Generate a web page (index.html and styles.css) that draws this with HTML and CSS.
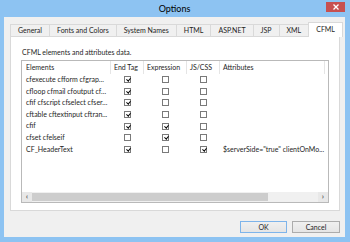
FILE: index.html
```html
<!DOCTYPE html>
<html lang="en">
<head>
    <meta charset="UTF-8">
    <title>Options</title>
    <link rel="stylesheet" href="styles.css">
</head>
<body>
    <div class="window">
        <div class="titlebar">
            <span class="title">Options</span>
            <div class="close">
                <svg width="6" height="6" viewBox="0 0 6 6"><path d="M0.5 0.5 L5.5 5.5 M5.5 0.5 L0.5 5.5" stroke="#fff" stroke-width="1.3"/></svg>
            </div>
        </div>

        <div class="dialog">
            <div class="tabs">
                <div class="tab">General</div>
                <div class="tab">Fonts and Colors</div>
                <div class="tab">System Names</div>
                <div class="tab">HTML</div>
                <div class="tab">ASP.NET</div>
                <div class="tab">JSP</div>
                <div class="tab">XML</div>
                <div class="tab active">CFML</div>
            </div>

            <div class="panel">
                <div class="caption">CFML elements and attributes data.</div>
                <div class="listview">
                    <div class="lv-head">
                        <div class="col">Elements</div>
                        <div class="col">End Tag</div>
                        <div class="col">Expression</div>
                        <div class="col">JS/CSS</div>
                        <div class="col">Attributes</div>
                    </div>
                    <div class="lv-body">
                        <div class="row">
                            <div class="cell">cfexecute cfform cfgrap...</div>
                            <div class="cell chk"><span class="cb on"></span></div>
                            <div class="cell chk"><span class="cb"></span></div>
                            <div class="cell chk"><span class="cb"></span></div>
                            <div class="cell"></div>
                        </div>
                        <div class="row">
                            <div class="cell">cfloop cfmail cfoutput cf...</div>
                            <div class="cell chk"><span class="cb on"></span></div>
                            <div class="cell chk"><span class="cb"></span></div>
                            <div class="cell chk"><span class="cb"></span></div>
                            <div class="cell"></div>
                        </div>
                        <div class="row">
                            <div class="cell">cfif cfscript cfselect cfser...</div>
                            <div class="cell chk"><span class="cb on"></span></div>
                            <div class="cell chk"><span class="cb"></span></div>
                            <div class="cell chk"><span class="cb"></span></div>
                            <div class="cell"></div>
                        </div>
                        <div class="row">
                            <div class="cell">cftable cftextinput cftran...</div>
                            <div class="cell chk"><span class="cb on"></span></div>
                            <div class="cell chk"><span class="cb"></span></div>
                            <div class="cell chk"><span class="cb"></span></div>
                            <div class="cell"></div>
                        </div>
                        <div class="row">
                            <div class="cell">cfif</div>
                            <div class="cell chk"><span class="cb on"></span></div>
                            <div class="cell chk"><span class="cb on"></span></div>
                            <div class="cell chk"><span class="cb"></span></div>
                            <div class="cell"></div>
                        </div>
                        <div class="row">
                            <div class="cell">cfset cfelseif</div>
                            <div class="cell chk"><span class="cb"></span></div>
                            <div class="cell chk"><span class="cb on"></span></div>
                            <div class="cell chk"><span class="cb"></span></div>
                            <div class="cell"></div>
                        </div>
                        <div class="row">
                            <div class="cell">CF_HeaderText</div>
                            <div class="cell chk"><span class="cb on"></span></div>
                            <div class="cell chk"><span class="cb"></span></div>
                            <div class="cell chk"><span class="cb on"></span></div>
                            <div class="cell">$serverSide="true" clientOnMo...</div>
                        </div>
                    </div>
                    <div class="hscroll">
                        <div class="arrow">&#8249;</div>
                        <div class="track">
                            <div class="thumb"></div>
                        </div>
                        <div class="arrow">&#8250;</div>
                    </div>
                </div>
            </div>

            <div class="buttons">
                <button class="btn default">OK</button>
                <button class="btn">Cancel</button>
            </div>
        </div>
    </div>
</body>
</html>
```

FILE: styles.css
```css
* {
    margin: 0;
    padding: 0;
    box-sizing: border-box;
}

body {
    width: 350px;
    height: 242px;
    overflow: hidden;
    font-family: 'Lato', 'Open Sans', sans-serif;
    font-size: 7px;
    color: #1e1e1e;
}

.window {
    width: 350px;
    height: 242px;
    background: #8dc3f2;
    padding: 0 5px 5px 4px;
    display: flex;
    flex-direction: column;
}

.titlebar {
    height: 17px;
    display: grid;
    grid-template-columns: 1fr auto 1fr;
}

.title {
    grid-column: 2;
    font-size: 9px;
    line-height: 17px;
    color: #000;
}

.close {
    grid-column: 3;
    justify-self: end;
    margin-top: 2px;
    width: 19px;
    height: 10px;
    background: #c75050;
    display: flex;
    align-items: center;
    justify-content: center;
}

.dialog {
    flex: 1;
    background: #f0f0f0;
    padding: 5px 5px 4px 6px;
    display: flex;
    flex-direction: column;
}

/* tab strip */
.tabs {
    display: flex;
    align-items: flex-end;
    height: 14px;
}

.tab {
    height: 12px;
    line-height: 11px;
    padding: 0 7px;
    border: 1px solid #d9d9d9;
    border-bottom: none;
    margin-right: -1px;
    background: #f0f0f0;
    white-space: nowrap;
}

.tab.active {
    height: 15px;
    line-height: 13px;
    background: #fff;
    margin-bottom: -1px;
    position: relative;
    z-index: 1;
}

.panel {
    height: 175px;
    background: #fff;
    border: 1px solid #d9d9d9;
    padding: 10px 10px 7px 10px;
    display: flex;
    flex-direction: column;
}

.caption {
    height: 10px;
    line-height: 10px;
    padding-left: 1px;
    margin-bottom: 3px;
}

/* list view */
.listview {
    flex: 1;
    border: 1px solid #b9b9b9;
    display: flex;
    flex-direction: column;
    overflow: hidden;
}

.lv-head,
.row {
    display: grid;
    grid-template-columns: 89px 33px 43px 33px 105px;
}

.lv-head {
    height: 13px;
}

.lv-head .col {
    line-height: 13px;
    padding-left: 3px;
    border-right: 1px solid #e5e5e5;
    white-space: nowrap;
}

.lv-head .col:first-child {
    padding-left: 4px;
}

.lv-body {
    flex: 1;
}

.row {
    height: 11.6px;
}

.cell {
    line-height: 11.6px;
    padding-left: 4px;
    white-space: nowrap;
    overflow: hidden;
}

.cell:last-child {
    padding-left: 3px;
}

.cell.chk {
    padding-left: 0;
    display: flex;
    align-items: center;
    justify-content: center;
}

.cb {
    width: 7px;
    height: 7px;
    border: 1px solid #7a7a7a;
    background: #fff;
    position: relative;
}

.cb.on::after {
    content: "";
    position: absolute;
    left: 1.5px;
    top: 0;
    width: 1.6px;
    height: 3.2px;
    border-right: 1.2px solid #000;
    border-bottom: 1.2px solid #000;
    transform: rotate(40deg);
}

.hscroll {
    height: 10px;
    display: flex;
    background: #e8e8e8;
}

.arrow {
    width: 10px;
    line-height: 9px;
    text-align: center;
    font-size: 8px;
    font-weight: bold;
    color: #606060;
}

.track {
    flex: 1;
    background: #f0f0f0;
    padding: 1px 0;
}

.thumb {
    width: 236px;
    height: 8px;
    background: #cdcdcd;
}

/* dialog buttons */
.buttons {
    margin-top: 10px;
    display: flex;
    justify-content: flex-end;
    gap: 5px;
}

.btn {
    width: 48px;
    height: 12px;
    font-family: inherit;
    font-size: 7px;
    color: #1e1e1e;
    border: 1px solid #acacac;
    background: linear-gradient(#f0f0f0, #e5e5e5);
}

.btn.default {
    width: 47px;
    border-color: #7eb4ea;
}
```
